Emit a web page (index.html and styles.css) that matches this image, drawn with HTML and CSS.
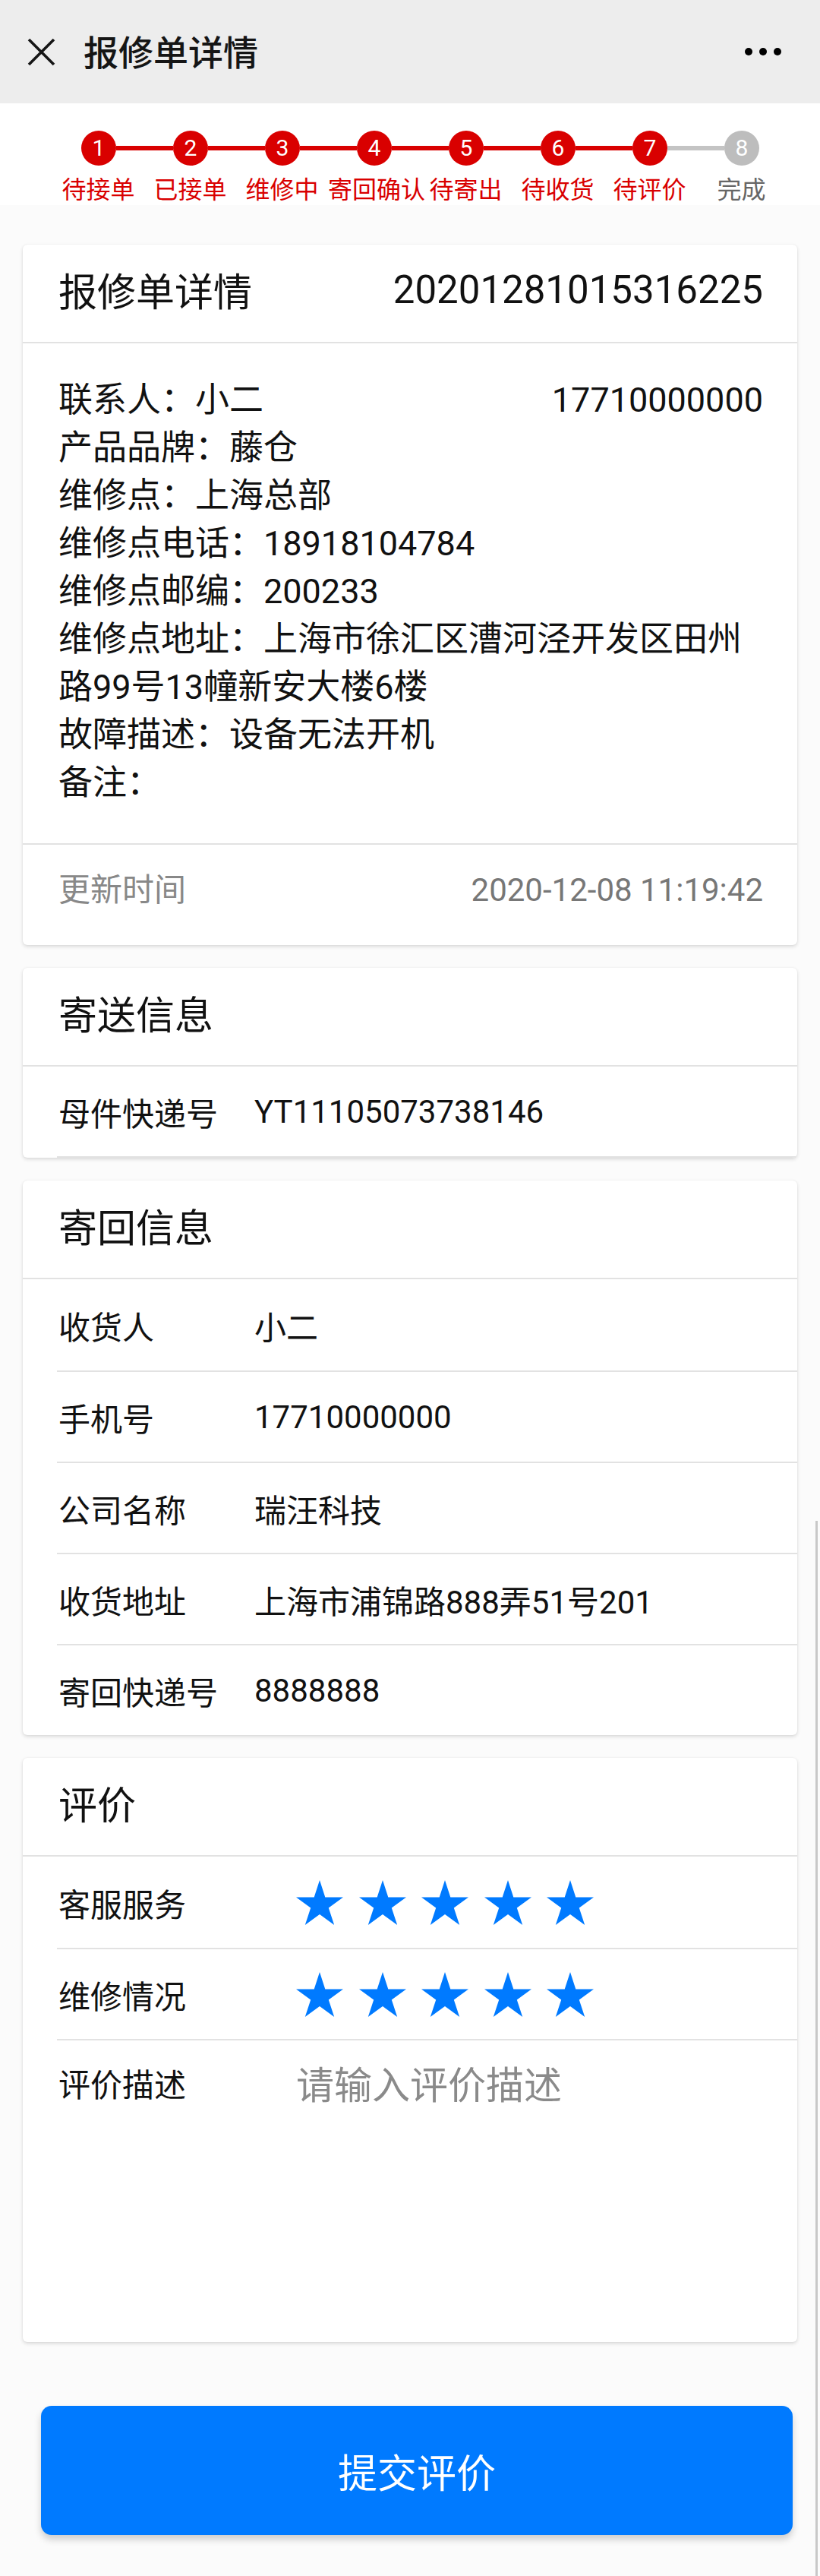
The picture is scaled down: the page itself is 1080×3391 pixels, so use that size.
FILE: index.html
```html
<!DOCTYPE html>
<html lang="zh-CN">
<head>
<meta charset="utf-8">
<title>报修单详情</title>
<link rel="stylesheet" href="styles.css">
</head>
<body>
<svg class="defs" width="0" height="0" aria-hidden="true">
  <symbol id="star" viewBox="0 0 62 59">
    <polygon points="31,0 38.3,22.5 62,22.5 42.8,36.5 50.2,59 31,45 11.8,59 19.2,36.5 0,22.5 23.7,22.5"/>
  </symbol>
</svg>
<div class="page">
  <header class="topbar">
    <svg class="close" viewBox="0 0 37 37" width="37" height="37"><path d="M2 2L35 35M35 2L2 35" stroke="#151515" stroke-width="3.6" fill="none"/></svg>
    <h1 class="title">报修单详情</h1>
    <div class="more"><span></span><span></span><span></span></div>
  </header>

  <section class="steps">
    <div class="track">
      <span class="dot">1</span><span class="seg"></span>
      <span class="dot">2</span><span class="seg"></span>
      <span class="dot">3</span><span class="seg"></span>
      <span class="dot">4</span><span class="seg"></span>
      <span class="dot">5</span><span class="seg"></span>
      <span class="dot">6</span><span class="seg"></span>
      <span class="dot">7</span><span class="seg todo"></span>
      <span class="dot todo">8</span>
    </div>
    <div class="labels">
      <span>待接单</span><span>已接单</span><span>维修中</span><span>寄回确认</span>
      <span>待寄出</span><span>待收货</span><span>待评价</span><span class="todo">完成</span>
    </div>
  </section>

  <main class="cards">
    <section class="card">
      <div class="card-head split">
        <span>报修单详情</span><span>20201281015316225</span>
      </div>
      <div class="detail">
        <p class="split"><span>联系人：小二</span><span>17710000000</span></p>
        <p>产品品牌：藤仓</p>
        <p>维修点：上海总部</p>
        <p>维修点电话：18918104784</p>
        <p>维修点邮编：200233</p>
        <p>维修点地址：上海市徐汇区漕河泾开发区田州路99号13幢新安大楼6楼</p>
        <p>故障描述：设备无法开机</p>
        <p>备注：</p>
      </div>
      <div class="card-foot split">
        <span>更新时间</span><span>2020-12-08 11:19:42</span>
      </div>
    </section>

    <section class="card">
      <div class="card-head">寄送信息</div>
      <div class="row lined"><span class="key">母件快递号</span><span class="val">YT11105073738146</span></div>
    </section>

    <section class="card">
      <div class="card-head">寄回信息</div>
      <div class="row"><span class="key">收货人</span><span class="val">小二</span></div>
      <div class="row"><span class="key">手机号</span><span class="val">17710000000</span></div>
      <div class="row"><span class="key">公司名称</span><span class="val">瑞汪科技</span></div>
      <div class="row"><span class="key">收货地址</span><span class="val">上海市浦锦路888弄51号201</span></div>
      <div class="row"><span class="key">寄回快递号</span><span class="val">8888888</span></div>
    </section>

    <section class="card">
      <div class="card-head">评价</div>
      <div class="row rate"><span class="key">客服服务</span>
        <span class="stars">
          <svg><use href="#star"/></svg><svg><use href="#star"/></svg><svg><use href="#star"/></svg><svg><use href="#star"/></svg><svg><use href="#star"/></svg>
        </span>
      </div>
      <div class="row rate"><span class="key">维修情况</span>
        <span class="stars">
          <svg><use href="#star"/></svg><svg><use href="#star"/></svg><svg><use href="#star"/></svg><svg><use href="#star"/></svg><svg><use href="#star"/></svg>
        </span>
      </div>
      <div class="row rate desc"><span class="key">评价描述</span>
        <textarea class="input" placeholder="请输入评价描述"></textarea>
      </div>
    </section>
  </main>

  <button class="submit" type="button">提交评价</button>
  <div class="scrollbar"></div>
</div>
</body>
</html>
```

FILE: styles.css
```css
* { box-sizing: border-box; }
html, body { margin: 0; padding: 0; }
body {
  width: 1080px;
  background: #fbfbfb;
  font-family: Roboto, "Noto Sans CJK SC", sans-serif;
  color: #111;
}
.defs { position: absolute; }
.page { position: relative; min-height: 3391px; padding-bottom: 51px; }

.topbar {
  height: 136px;
  background: #ededed;
  display: flex;
  align-items: center;
  padding: 0 51px 0 36px;
}
.close { display: block; flex: none; }
.title {
  margin: 0 0 0 37px;
  font-size: 46px;
  font-weight: 500;
  color: #151515;
  line-height: 1;
  padding-top: 4px;
}
.more { margin-left: auto; display: flex; gap: 9px; }
.more span { width: 10px; height: 10px; border-radius: 50%; background: #000; }

.steps { padding-top: 36px; background: #fff; }
.track { display: flex; align-items: center; margin-left: 107px; }
.dot {
  width: 46px; height: 46px; border-radius: 50%;
  background: #d90000; color: #fff;
  font-size: 30px; line-height: 46px; text-align: center;
  flex: none;
}
.dot.todo { background: #bdbdbd; }
.seg { width: 75px; height: 6px; background: #d90000; flex: none; }
.seg.todo { background: #c4c4c4; }
.labels {
  display: grid;
  grid-template-columns: repeat(8, 121px);
  margin-left: 69px;
  margin-top: 12px;
  font-size: 32px;
  line-height: 40px;
  color: #d90000;
  text-align: center;
  white-space: nowrap;
}
.labels .todo { color: #666; }

.cards {
  display: flex;
  flex-direction: column;
  gap: 30px;
  padding: 52px 30px 0;
}
.card {
  background: #fff;
  border-radius: 6px;
  box-shadow: 0 2px 5px rgba(0,0,0,0.14), 0 0 2px rgba(0,0,0,0.06);
  overflow: hidden;
}
.split { display: flex; justify-content: space-between; align-items: center; }
.card-head {
  height: 130px;
  padding: 0 45px 10px 47px;
  display: flex;
  align-items: center;
  border-bottom: 2px solid #e2e2e2;
  font-size: 51px;
}
.card-head.split { justify-content: space-between; }

.detail { padding: 43px 45px 48px 47px; border-bottom: 2px solid #e2e2e2; }
.detail p { margin: 0; font-size: 45px; line-height: 63px; }

.card-foot {
  padding: 28px 45px 41px 47px;
  font-size: 42px;
  line-height: 63px;
  color: #888;
}
.card-foot span:last-child { color: #777; }

.row {
  height: 120px;
  display: flex;
  align-items: center;
  font-size: 42px;
  padding-left: 47px;
  position: relative;
}
.row + .row { border-top: 2px solid #e2e2e2; margin-left: 45px; padding-left: 2px; }
.row.lined { border-bottom: 2px solid #e2e2e2; margin-left: 45px; padding-left: 2px; }
.key { width: 258px; flex: none; }
.rate .key { width: 313px; }
.stars { display: flex; gap: 20.5px; }
.stars svg { width: 62px; height: 59px; fill: #007aff; display: block; }

.desc { height: 399px; align-items: flex-start; padding-top: 28px; }
.desc .key { line-height: 64px; }
.input {
  flex: 1;
  height: 340px;
  border: 0;
  outline: none;
  resize: none;
  padding: 0;
  margin: 0;
  background: transparent;
  font-family: Roboto, "Noto Sans CJK SC", sans-serif;
  font-size: 50px;
  line-height: 64px;
  color: #333;
}
.input::placeholder { color: #8a8a8a; }

.submit {
  display: block;
  margin: 84px 0 0 54px;
  width: 990px;
  height: 170px;
  border: 0;
  border-radius: 14px;
  background: #007aff;
  color: #fff;
  font-family: Roboto, "Noto Sans CJK SC", sans-serif;
  font-size: 52px;
  box-shadow: 0 6px 10px rgba(0,0,0,0.18);
}

.scrollbar {
  position: absolute;
  right: 3px;
  top: 2002px;
  bottom: 0;
  width: 3px;
  background: #c8c8c8;
}
```
